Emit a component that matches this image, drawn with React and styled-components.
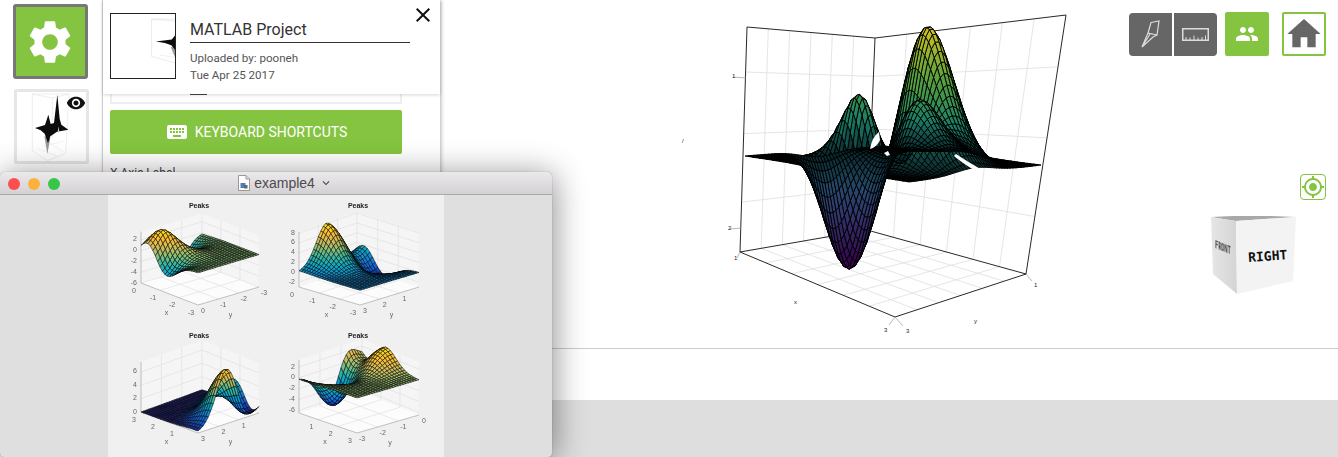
import React from 'react'
import styled, { createGlobalStyle } from 'styled-components'
import { MdSettings, MdKeyboard, MdVisibility, MdPeople, MdHome, MdClose, MdGpsFixed, MdKeyboardArrowDown } from 'react-icons/md'

const GREEN = '#84c441'
const GREY = '#666'

const GlobalStyle = createGlobalStyle`
    html, body {
        margin: 0;
        padding: 0;
        background: #fff;
    }
    * {
        box-sizing: border-box;
    }
`

const Page = styled.div`
    position: relative;
    display: flex;
    width: 1338px;
    height: 457px;
    overflow: hidden;
    background: #fff;
    font-family: Roboto, sans-serif;
    color: #333;
`
const Rail = styled.nav`
    flex: 0 0 103px;
    display: flex;
    flex-direction: column;
    gap: 10px;
    padding: 4px 0 0 13px;
    border-right: 1px solid #ddd;
`
const SettingsButton = styled.button`
    width: 75px;
    height: 75px;
    padding: 0 1px 0 0;
    display: flex;
    align-items: center;
    justify-content: center;
    color: #fff;
    background: ${GREEN};
    border: 3px solid #777;
    border-radius: 3px;
`
const ModelThumb = styled.div`
    position: relative;
    width: 75px;
    height: 75px;
    margin-left: 1px;
    background: #fff;
    border: 3px solid #e6e6e6;
    border-radius: 2px;

    svg {
        display: block;
    }
`
const EyeBadge = styled.span`
    position: absolute;
    top: 1px;
    right: 0;
    display: flex;
    color: #111;
`
const Sidebar = styled.aside`
    flex: 0 0 337px;
    display: flex;
    flex-direction: column;
    background: #fff;
    box-shadow: 1px 0 4px rgba(0, 0, 0, 0.3);
    z-index: 1;
`
const ProjectHeader = styled.header`
    position: relative;
    flex: 0 0 94px;
    display: flex;
    gap: 14px;
    padding: 13px 0 0 7px;
    box-shadow: 0 1px 3px rgba(0, 0, 0, 0.16);
    z-index: 1;
`
const HeaderThumb = styled.div`
    width: 66px;
    height: 66px;
    border: 1px solid #222;
    overflow: hidden;

    svg {
        display: block;
    }
`
const ProjectInfo = styled.div`
    width: 220px;
`
const ProjectTitle = styled.h1`
    margin: 6px 0 0;
    height: 24px;
    font-size: 16px;
    line-height: 22px;
    font-weight: 400;
    color: #333;
    border-bottom: 1px solid #333;
`
const ProjectMeta = styled.p`
    margin: ${props => props.$first ? '9px' : '5px'} 0 0;
    font-size: 11.6px;
    line-height: 12px;
    color: #555;
`
const CloseButton = styled.button`
    position: absolute;
    top: 3px;
    right: 5px;
    display: flex;
    padding: 0;
    border: none;
    background: none;
    color: #111;
`
const SidebarBody = styled.div`
    display: flex;
    flex-direction: column;
    padding: 0 0 0 7px;
`
const ClippedField = styled.div`
    width: 292px;
    height: 10px;
    border: 2px solid #eee;
    border-top: none;
    padding-left: 78px;
`
const ClippedStub = styled.div`
    width: 17px;
    height: 1px;
    background: #444;
`
const ShortcutsButton = styled.button`
    width: 292px;
    height: 44px;
    margin-top: 6px;
    display: flex;
    align-items: center;
    justify-content: center;
    gap: 6px;
    border: none;
    border-radius: 2px;
    background: ${GREEN};
    color: #fff;
    font-family: Roboto, sans-serif;
    font-size: 14px;
`
const FieldLabel = styled.label`
    margin-top: 12px;
    font-size: 12px;
    color: #444;
`
const Workspace = styled.main`
    flex: 1;
    display: flex;
    flex-direction: column;
`
const Viewport = styled.section`
    position: relative;
    height: 349px;
    border-bottom: 1px solid #ccc;

    & > svg {
        display: block;
    }
`
const Spacer = styled.div`
    height: 51px;
`
const Footer = styled.footer`
    flex: 1;
    background: #dedede;
`
const Toolbar = styled.div`
    position: absolute;
    top: 12px;
    right: 12px;
    display: flex;
    align-items: flex-start;
`
const ToolGroup = styled.div`
    display: flex;
    gap: 1.5px;
    margin-top: 1px;
    margin-right: 8px;
    border-radius: 4px;
    overflow: hidden;
`
const ToolButton = styled.button`
    width: 43.25px;
    height: 43px;
    padding: 0;
    display: flex;
    align-items: center;
    justify-content: center;
    border: none;
    background: ${GREY};
`
const SquareButton = styled.button`
    width: 44px;
    height: 44px;
    padding: 0;
    display: flex;
    align-items: center;
    justify-content: center;
    margin-right: ${props => props.$gap || 0}px;
    border: 2px solid ${GREEN};
    border-radius: 2px;
    background: ${props => props.$filled ? GREEN : '#fff'};
    color: ${props => props.$filled ? '#fff' : GREY};
`
const RecenterButton = styled.button`
    position: absolute;
    top: 174px;
    right: 12px;
    width: 26px;
    height: 26px;
    padding: 0;
    display: flex;
    align-items: center;
    justify-content: center;
    border: 1px solid ${GREEN};
    border-radius: 4px;
    background: #fff;
    color: ${GREEN};
`
const CubeWrap = styled.div`
    position: absolute;
    top: 215px;
    right: 40px;
    width: 88px;
    height: 82px;
`
const Window = styled.section`
    position: absolute;
    left: 0;
    top: 172px;
    width: 552px;
    height: 285px;
    display: flex;
    flex-direction: column;
    border-radius: 5px 5px 4px 4px;
    overflow: hidden;
    background: #dfdfdf;
    box-shadow: 2px 3px 32px rgba(0, 0, 0, 0.45), 0 0 1px rgba(0, 0, 0, 0.5);
    z-index: 2;
`
const TitleBar = styled.div`
    position: relative;
    flex: 0 0 23px;
    display: flex;
    align-items: center;
    justify-content: center;
    gap: 4px;
    padding-left: 19px;
    background: linear-gradient(#ebe9eb, #d3d1d3);
    border-bottom: 1px solid #aaa8aa;
    font-family: "Liberation Sans", Arial, sans-serif;
    font-size: 14px;
    color: #4c4a4f;
`
const Lights = styled.div`
    position: absolute;
    left: 8px;
    top: 6px;
    display: flex;
    gap: 8px;
`
const Light = styled.span`
    width: 12px;
    height: 12px;
    border-radius: 50%;
    background: ${props => props.$color};
`
const WindowBody = styled.div`
    flex: 1;
    padding-left: 108px;
`
const FigurePanel = styled.div`
    width: 336px;
    height: 100%;
    background: #f0f0f0;

    svg {
        display: block;
        filter: blur(0.35px);
    }
`

// the peaks() surface every plot in the picture shows
const peaks = (x, y) =>
    3 * (1 - x) ** 2 * Math.exp(-x * x - (y + 1) ** 2)
    - 10 * (x / 5 - x ** 3 - y ** 5) * Math.exp(-x * x - y * y)
    - Math.exp(-((x + 1) ** 2) - y * y) / 3

const lerp = (a, b, t) => a + (b - a) * t
const lerpPt = (a, b, t) => [lerp(a[0], b[0], t), lerp(a[1], b[1], t)]

const mixStops = (stops, t, dim = 1) => {
    const c = Math.max(0, Math.min(0.999, t)) * (stops.length - 1)
    const i = Math.floor(c)
    const a = stops[i]
    const b = stops[i + 1]
    const f = c - i
    const ch = k => Math.round(lerp(a[k], b[k], f) * dim)
    return `rgb(${ch(0)},${ch(1)},${ch(2)})`
}
const VIRIDIS = [[60, 1, 80], [55, 60, 120], [32, 100, 120], [28, 140, 112], [100, 180, 68], [235, 215, 35]]
const PARULA = [[30, 30, 120], [15, 92, 221], [20, 129, 214], [6, 164, 202], [46, 183, 164], [135, 191, 119], [209, 187, 89], [254, 190, 50], [249, 220, 14]]

const line = (a, b) => `M${a[0].toFixed(1)} ${a[1].toFixed(1)}L${b[0].toFixed(1)} ${b[1].toFixed(1)}`

// main view: corner points read off the screenshot
const MAIN = {
    a: [741, 252], b: [868, 230], c: [1027, 274], d: [896, 317],
    at: [748, 27], bt: [876, 38], ct: [1067, 15],
    l0: [746, 156], b0: [885, 146], r0: [1042, 165], f0: [910, 182],
}

// the reference's hills are broader than peaks() at this scale, so ease the sampling
const mainHeight = (x, y) => peaks(x * 0.85, y + (y < 0 ? 0.17 : 0.06) * Math.sin(Math.PI * y / 1.6))

const mainPoint = (x, y) => {
    const r = (3 - x) / 6
    const s = (y + 3) / 6
    const p = lerpPt(lerpPt(MAIN.b0, MAIN.r0, s), lerpPt(MAIN.l0, MAIN.f0, s), r)
    const z = mainHeight(x, y)
    const bump = 16 * r * (1 - r) * s * (1 - s)
    return [p[0] - 11 * bump, p[1] - z * (15.5 + 4 * r)]
}

const buildMainMesh = () => {
    const n = 48
    const quads = []
    for (let i = 0; i < n; i++) {
        for (let j = 0; j < n; j++) {
            const x0 = -3 + 6 * i / n
            const x1 = -3 + 6 * (i + 1) / n
            const y0 = -3 + 6 * j / n
            const y1 = -3 + 6 * (j + 1) / n
            const pts = [mainPoint(x0, y0), mainPoint(x1, y0), mainPoint(x1, y1), mainPoint(x0, y1)]
            const z = mainHeight((x0 + x1) / 2, (y0 + y1) / 2)
            quads.push({
                key: -j - i * 0.15,
                d: 'M' + pts.map(p => `${p[0].toFixed(1)} ${p[1].toFixed(1)}`).join('L') + 'Z',
                // the flat part of the surface reads almost black in the reference
                fill: mixStops(VIRIDIS, (z + 6.55) / 14.65, 0.3 + 0.6 * Math.min(1, Math.abs(z) / 2.2)),
            })
        }
    }
    return quads.sort((a, b) => a.key - b.key)
}

const buildMainGrid = () => {
    const { a, b, c, d, at, bt, ct } = MAIN
    const parts = []
    for (let i = 1; i < 6; i++) {
        const t = i / 6
        parts.push(line(lerpPt(a, b, t), lerpPt(at, bt, t)))
        parts.push(line(lerpPt(b, c, t), lerpPt(bt, ct, t)))
        parts.push(line(lerpPt(a, b, t), lerpPt(d, c, t)))
        parts.push(line(lerpPt(b, c, t), lerpPt(a, d, t)))
    }
    ;[0.24, 0.62].forEach(t => {
        parts.push(line(lerpPt(a, at, t * 0.8 + 0.03), lerpPt(b, bt, t * 0.8 + 0.03)))
        parts.push(line(lerpPt(b, bt, t * 0.8 + 0.03), lerpPt(c, ct, t * 0.8 + 0.03)))
    })
    parts.push(line(lerpPt(a, at, 0.8), lerpPt(b, bt, 0.8)))
    parts.push(line(lerpPt(b, bt, 0.8), lerpPt(c, ct, 0.8)))
    return parts.join('')
}

const MAIN_QUADS = buildMainMesh()
const MAIN_GRID = buildMainGrid()

const AxisMark = styled.text`
    font-family: "Liberation Sans", Arial, sans-serif;
    font-size: 6px;
    fill: #222;
`

const MainPlot = () => {
    const { a, b, c, d, at, bt, ct } = MAIN
    return (
        <svg width="897" height="348" viewBox="441 0 897 348">
            <path d={MAIN_GRID} stroke="#dedede" strokeWidth="0.8" fill="none" />
            <path
                d={line(at, bt) + line(bt, ct) + line(a, at) + line(c, ct) + line(bt, b) + line(a, b) + line(b, c) + line(a, d) + line(d, c)}
                stroke="#111" strokeWidth="0.9" fill="none"
            />
            <path d="M734 77l13 1M731 229l11-1M741 252l-3 6M1027 274l6 7M896 317l-6 8M896 317l8 9" stroke="#999" strokeWidth="0.7" fill="none" />
            {MAIN_QUADS.map((q, i) => (
                <path key={i} d={q.d} fill={q.fill} stroke="#000" strokeWidth="0.9" />
            ))}
            <path d="M871 149q2-12 9-17l1 8q-3 7-10 9ZM885 153l4-2 2 4-3 1ZM957 154q12 8 28 17l-6 1q-12-6-24-16Z" fill="#fff" />
            <AxisMark x="733" y="78">1</AxisMark>
            <AxisMark x="683" y="143">/</AxisMark>
            <AxisMark x="729" y="230">2</AxisMark>
            <AxisMark x="735" y="260">1</AxisMark>
            <AxisMark x="795" y="304">x</AxisMark>
            <AxisMark x="975" y="323">y</AxisMark>
            <AxisMark x="885" y="332">3</AxisMark>
            <AxisMark x="907" y="333">3</AxisMark>
            <AxisMark x="1035" y="287">1</AxisMark>
        </svg>
    )
}

// quadrant charts of the figure window
const FIGURES = [
    {
        l: [141, 283], f: [198, 305], r: [259, 287], b: [202, 265],
        xs: [0, -3], ys: [0, -3], zFloor: -6, zTop: 3.5, scale: 5.4, range: [-6.6, 3.9],
        zTicks: [2, 0, -2, -4, -6], title: [199, 208], xSkip: null, ySkip: null,
    },
    {
        l: [299, 287], f: [360, 305], r: [419, 287], b: [357, 267],
        xs: [0, -3], ys: [3, 0], zFloor: -3, zTop: 8.2, scale: 4.9, range: [-3, 8.1],
        zTicks: [8, 6, 4, 2, 0, -2], title: [358, 208], xSkip: null, ySkip: 0,
    },
    {
        l: [141, 412], f: [198, 433], r: [259, 413], b: [202, 390],
        xs: [3, 0], ys: [3, 0], zFloor: 0, zTop: 7.5, scale: 6.67, range: [0, 8.1],
        zTicks: [6, 4, 2, 0], title: [199, 338], xSkip: 0, ySkip: 0,
    },
    {
        l: [299, 413], f: [357, 433], r: [419, 415], b: [362, 392],
        xs: [0, 3], ys: [-3, 0], zFloor: -6.5, zTop: 3.3, scale: 5.4, range: [-6.6, 3.6],
        zTicks: [2, 0, -2, -4, -6], title: [358, 338], xSkip: 0, ySkip: null,
    },
]

const buildFigure = fig => {
    const floor = (u, v) => lerpPt(lerpPt(fig.l, fig.f, u), lerpPt(fig.b, fig.r, u), v)
    const point = (u, v) => {
        const x = lerp(fig.xs[0], fig.xs[1], u)
        const y = lerp(fig.ys[0], fig.ys[1], v)
        const z = peaks(x, y)
        const p = floor(u, v)
        return { p: [p[0], p[1] - (Math.max(z, fig.zFloor) - fig.zFloor) * fig.scale], z }
    }
    const n = 24
    const quads = []
    for (let i = 0; i < n; i++) {
        for (let j = 0; j < n; j++) {
            const corners = [point(i / n, j / n), point((i + 1) / n, j / n), point((i + 1) / n, (j + 1) / n), point(i / n, (j + 1) / n)]
            const z = corners.reduce((sum, c) => sum + c.z, 0) / 4
            quads.push({
                key: i - j,
                d: 'M' + corners.map(c => `${c.p[0].toFixed(1)} ${c.p[1].toFixed(1)}`).join('L') + 'Z',
                fill: mixStops(PARULA, (z - fig.range[0]) / (fig.range[1] - fig.range[0])),
            })
        }
    }
    quads.sort((a, b) => a.key - b.key)

    const h = (fig.zTop - fig.zFloor) * fig.scale
    const up = p => [p[0], p[1] - h]
    const grid = []
    for (let i = 1; i < 3; i++) {
        const t = i / 3
        grid.push(line(lerpPt(fig.l, fig.b, t), up(lerpPt(fig.l, fig.b, t))))
        grid.push(line(lerpPt(fig.b, fig.r, t), up(lerpPt(fig.b, fig.r, t))))
        grid.push(line(lerpPt(fig.l, fig.b, t), lerpPt(fig.f, fig.r, t)))
        grid.push(line(lerpPt(fig.b, fig.r, t), lerpPt(fig.l, fig.f, t)))
    }
    grid.push(line(fig.b, up(fig.b)))
    fig.zTicks.forEach(z => {
        const dz = (z - fig.zFloor) * fig.scale
        const lift = p => [p[0], p[1] - dz]
        grid.push(line(lift(fig.l), lift(fig.b)))
        grid.push(line(lift(fig.b), lift(fig.r)))
    })
    const poly = pts => 'M' + pts.map(p => `${p[0]} ${p[1]}`).join('L') + 'Z'
    return {
        quads,
        grid: grid.join(''),
        wall: poly([fig.l, up(fig.l), up(fig.b), up(fig.r), fig.r, fig.b]),
        floor: poly([fig.l, fig.f, fig.r, fig.b]),
    }
}

const FIGURE_DATA = FIGURES.map(buildFigure)

const TickText = styled.text`
    font-family: "Liberation Sans", Arial, sans-serif;
    font-size: 7px;
    fill: #666;
    text-anchor: ${props => props.$anchor || 'middle'};
`
const ChartTitle = styled.text`
    font-family: "Liberation Sans", Arial, sans-serif;
    font-size: 7px;
    font-weight: 700;
    fill: #222;
    text-anchor: middle;
`

const edgeTicks = (a, b, from, to, skip, dx, dy, prefix) => {
    const step = to > from ? 1 : -1
    const out = []
    for (let v = from, i = 0; i <= 3; v += step, i++) {
        const p = lerpPt(a, b, i / 3)
        if (v !== skip) {
            out.push(<TickText key={`${prefix}${i}`} x={p[0] + dx} y={p[1] + dy + 3}>{v}</TickText>)
        }
    }
    return out
}

const PeaksFigure = () => (
    <svg width="336" height="262" viewBox="108 195 336 262">
        {FIGURES.map((fig, n) => {
            const data = FIGURE_DATA[n]
            return (
                <g key={n}>
                    <path d={data.wall} fill="#f5f5f5" />
                    <path d={data.floor} fill="#fcfcfc" />
                    <path d={data.grid} stroke="#dcdcdc" strokeWidth="0.6" fill="none" />
                    <path d={line(fig.l, fig.f) + line(fig.f, fig.r) + line(fig.l, [fig.l[0], fig.l[1] - (fig.zTop - fig.zFloor) * fig.scale])} stroke="#888" strokeWidth="0.5" fill="none" />
                    {data.quads.map((q, i) => (
                        <path key={i} d={q.d} fill={q.fill} stroke="#050505" strokeWidth="0.55" />
                    ))}
                    <ChartTitle x={fig.title[0]} y={fig.title[1]}>Peaks</ChartTitle>
                    {fig.zTicks.map(z => (
                        <TickText key={z} $anchor="end" x={fig.l[0] - 4} y={fig.l[1] - (z - fig.zFloor) * fig.scale + 1.5}>{z}</TickText>
                    ))}
                    {edgeTicks(fig.l, fig.f, fig.xs[0], fig.xs[1], fig.xSkip, -7, 6.5, 'x')}
                    {edgeTicks(fig.f, fig.r, fig.ys[0], fig.ys[1], fig.ySkip, 5, 5, 'y')}
                    <TickText x={(fig.l[0] + fig.f[0]) / 2 - 3} y={(fig.l[1] + fig.f[1]) / 2 + 21}>x</TickText>
                    <TickText x={(fig.f[0] + fig.r[0]) / 2 + 2} y={(fig.f[1] + fig.r[1]) / 2 + 21}>y</TickText>
                </g>
            )
        })}
    </svg>
)

// small preview of the model, shared by the rail and the project header
const ModelPreview = ({ size, viewBox }) => (
    <svg width={size} height={size} viewBox={viewBox} preserveAspectRatio="none">
        <path d="M97 283v170l45 30 55-22 10-178ZM97 283l60 12 50-12M157 295v120" stroke="#ddd" strokeWidth="1.5" fill="none" />
        <path d="M130 440l60-16M112 446l60 24M150 430l40 28" stroke="#e4e4e4" strokeWidth="1.5" fill="none" />
        <path d="M133 410l9 52 9-47z" fill="#999" />
        <path d="M105 385l30-9 10-31 7 28 10-3 10-85 7 72 5 18 21 15-34 6-20 14-7 21-10-29-12-10Z" fill="#0c0c0c" />
        <path d="M175 380l3 15-5 5Z" fill="#ccc" />
    </svg>
)

const PenIcon = () => (
    <svg width="43" height="43" viewBox="0 0 43 43" fill="none" stroke="#dcdcdc" strokeWidth="1.2">
        <path d="M22 9.5l8-1.5-2 14-9-2Z" />
        <path d="M19 20l-6 14 11-10 4-2M21 21l-8 13" />
    </svg>
)

const RulerIcon = () => (
    <svg width="27" height="13" viewBox="0 0 27 13" fill="none" stroke="#dcdcdc">
        <rect x="0.75" y="0.75" width="25.5" height="11.5" strokeWidth="1.5" />
        <path d="M4 12V9M8 12V9.5M12 12V7.5M16 12V9.5M20 12V9M23.5 12V7.5" strokeWidth="1" />
    </svg>
)

const DocIcon = () => (
    <svg width="12" height="16" viewBox="0 0 12 16">
        <path d="M0.5 0.5h7.5l3.5 3.5v11.5H0.5Z" fill="#fff" stroke="#999" />
        <path d="M8 0.5v3.5h3.5" fill="#ddd" stroke="#999" />
        <rect x="2.5" y="8" width="5" height="5" fill="#4a7fb5" />
        <rect x="6" y="10" width="3.5" height="3.5" fill="#666" />
    </svg>
)

const CubeLabel = styled.text`
    font-family: "DejaVu Sans Mono", monospace;
    font-weight: 700;
    fill: #111;
`

const ViewCube = () => (
    <svg width="88" height="82" viewBox="1210 216 88 82">
        <defs>
            <linearGradient id="cubeLeft" x1="0" y1="0" x2="1" y2="0">
                <stop offset="0" stopColor="#e6e6e6" />
                <stop offset="1" stopColor="#d4d4d4" />
            </linearGradient>
        </defs>
        <path d="M1211 218l22-1h38l25 1-60 4Z" fill="#a8a8a8" />
        <path d="M1211 218l25 4 1 73-24-20Z" fill="url(#cubeLeft)" />
        <path d="M1236 222l60-4-3 64-56 13Z" fill="#f3f3f3" />
        <CubeLabel fontSize="13" transform="translate(1248.5 263) rotate(-4)">RIGHT</CubeLabel>
        <CubeLabel fontSize="7" opacity="0.8" style={{ filter: 'blur(0.4px)' }} transform="translate(1215 249) matrix(0.75 0.3 0 1.5 0 0)">FRONT</CubeLabel>
    </svg>
)

const App = () => (
    <Page>
        <GlobalStyle />
        <Rail>
            <SettingsButton><MdSettings size={52} /></SettingsButton>
            <ModelThumb>
                <ModelPreview size={69} viewBox="51 277 207 207" />
                <EyeBadge><MdVisibility size={20} /></EyeBadge>
            </ModelThumb>
        </Rail>
        <Sidebar>
            <ProjectHeader>
                <HeaderThumb><ModelPreview size={64} viewBox="21 260 120 291" /></HeaderThumb>
                <ProjectInfo>
                    <ProjectTitle>MATLAB Project</ProjectTitle>
                    <ProjectMeta $first>Uploaded by: pooneh</ProjectMeta>
                    <ProjectMeta>Tue Apr 25 2017</ProjectMeta>
                </ProjectInfo>
                <CloseButton><MdClose size={24} /></CloseButton>
            </ProjectHeader>
            <SidebarBody>
                <ClippedField><ClippedStub /></ClippedField>
                <ShortcutsButton><MdKeyboard size={24} />KEYBOARD SHORTCUTS</ShortcutsButton>
                <FieldLabel>X Axis Label</FieldLabel>
            </SidebarBody>
        </Sidebar>
        <Workspace>
            <Viewport>
                <MainPlot />
                <Toolbar>
                    <ToolGroup>
                        <ToolButton><PenIcon /></ToolButton>
                        <ToolButton><RulerIcon /></ToolButton>
                    </ToolGroup>
                    <SquareButton $filled $gap={13}><MdPeople size={24} /></SquareButton>
                    <SquareButton><MdHome size={40} /></SquareButton>
                </Toolbar>
                <RecenterButton><MdGpsFixed size={24} /></RecenterButton>
                <CubeWrap><ViewCube /></CubeWrap>
            </Viewport>
            <Spacer />
            <Footer />
        </Workspace>
        <Window>
            <TitleBar>
                <Lights>
                    <Light $color="#fc4e4f" />
                    <Light $color="#fdb13d" />
                    <Light $color="#37c649" />
                </Lights>
                <DocIcon />
                example4
                <MdKeyboardArrowDown size={14} />
            </TitleBar>
            <WindowBody>
                <FigurePanel><PeaksFigure /></FigurePanel>
            </WindowBody>
        </Window>
    </Page>
)

export default App
